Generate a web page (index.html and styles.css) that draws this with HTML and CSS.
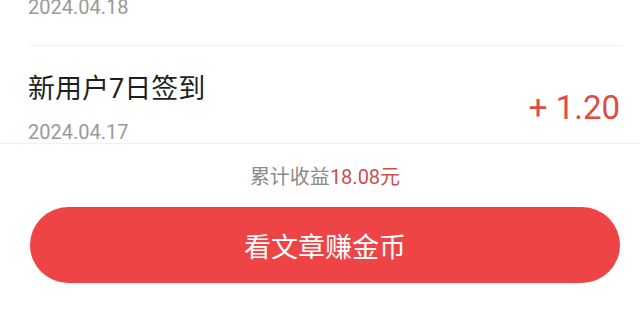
FILE: index.html
```html
<!DOCTYPE html>
<html lang="zh-CN">
<head>
<meta charset="utf-8">
<title>收益明细</title>
<link rel="stylesheet" href="styles.css">
</head>
<body>
<div class="page">
  <div class="list">
    <div class="list-inner">
      <div class="item">
        <div class="info">
          <div class="title">阅读文章奖励</div>
          <div class="date">2024.04.18</div>
        </div>
        <div class="amount">+ 0.30</div>
      </div>
      <div class="item">
        <div class="info">
          <div class="title">新用户7日签到</div>
          <div class="date">2024.04.17</div>
        </div>
        <div class="amount">+ 1.20</div>
      </div>
    </div>
  </div>
  <div class="footer">
    <div class="summary">累计收益<span class="total">18.08元</span></div>
    <button class="cta">看文章赚金币</button>
  </div>
</div>
</body>
</html>
```

FILE: styles.css
```css
html, body {
  margin: 0;
  padding: 0;
  background: #ffffff;
}
body {
  font-family: Roboto, "Noto Sans CJK SC", sans-serif;
  width: 640px;
  height: 309px;
  overflow: hidden;
}
.page {
  display: flex;
  flex-direction: column;
  height: 309px;
}
.list {
  height: 143px;
  overflow: hidden;
  border-bottom: 1px solid #f0f0f0;
  flex: none;
}
.list-inner {
  margin-top: -79px;
}
.item {
  display: flex;
  align-items: center;
  justify-content: space-between;
  height: 124px;
  margin: 0 17px 0 28px;
  padding-right: 3px;
  border-bottom: 1px solid #f3f3f3;
}
.info {
  display: flex;
  flex-direction: column;
  gap: 11px;
  padding-top: 1px;
}
.title {
  font-size: 27px;
  line-height: 36px;
  color: #1f1f1f;
}
.date {
  font-size: 20px;
  line-height: 28px;
  color: #9a9a9a;
}
.amount {
  font-size: 33px;
  line-height: 40px;
  color: #dd4c47;
}
.footer {
  display: flex;
  flex-direction: column;
  align-items: center;
  padding: 19px 20px 0 30px;
  gap: 16px;
}
.summary {
  font-size: 20px;
  line-height: 28px;
  color: #8a8a8a;
}
.total {
  color: #cf4f4f;
}
.cta {
  width: 590px;
  height: 76px;
  border: none;
  border-radius: 38px;
  background: #ee4445;
  color: #ffffff;
  font-family: Roboto, "Noto Sans CJK SC", sans-serif;
  font-size: 27px;
  padding: 0;
}
```
